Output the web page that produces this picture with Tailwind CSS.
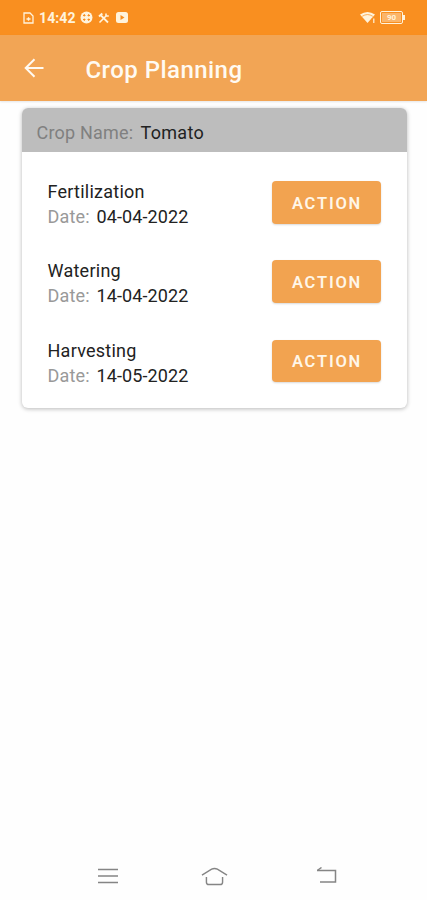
<!DOCTYPE html>
<html lang="en">
<head>
    <meta charset="UTF-8">
    <meta name="viewport" content="width=device-width, initial-scale=1.0">
    <title>Crop Planning</title>

    <!-- Tailwind CSS -->
    <script src="https://cdn.jsdelivr.net/npm/@tailwindcss/browser@4"></script>
</head>
<body class="bg-[#fefefe] font-[Roboto,sans-serif] flex flex-col h-screen overflow-hidden">

    <!-- Status Bar -->
    <div class="h-[35px] shrink-0 bg-[#f98f20] text-[#fff3dc] flex items-center justify-between pl-[23px] pr-[22.5px]">
        <div class="flex items-center">
            <svg class="w-[11px] h-[12px]" viewBox="0 0 11 12" fill="none" stroke="currentColor" stroke-width="1.3">
                <path d="M1 1h6l3 3v7H1z"/>
                <path d="M3.5 7h4M5.5 5.2v3.6"/>
            </svg>
            <span class="ml-[5px] w-[37px] text-[14px] leading-none font-bold tracking-[0.1px] whitespace-nowrap">14:42</span>
            <svg class="ml-[4px] w-[13px] h-[13px]" viewBox="0 0 13 13">
                <circle cx="6.5" cy="6.5" r="6" fill="currentColor"/>
                <path d="M3 4.5h2.5M7.5 4.5H10M3 8.5h2.5M7.5 8.5H10M4.3 3v2.5M8.7 3v2.5M4.3 7.5V10M8.7 7.5V10" stroke="#f98f20" stroke-width="1"/>
            </svg>
            <svg class="ml-[5px] w-[12px] h-[12px]" viewBox="0 0 12 12" fill="none" stroke="currentColor">
                <path d="M3 3.5l7 7" stroke-width="1.8"/>
                <path d="M1 4.5L4.3 1.5" stroke-width="2"/>
                <path d="M1.5 10.5L8 4" stroke-width="1.6"/>
                <path d="M8 1.5v2.5h2.8" stroke-width="1.6"/>
            </svg>
            <svg class="ml-[6px] w-[12px] h-[11px]" viewBox="0 0 12 11">
                <rect width="12" height="11" rx="2.5" fill="currentColor"/>
                <path d="M4.5 3v5l4-2.5z" fill="#f98f20"/>
            </svg>
        </div>
        <div class="flex items-center">
            <svg class="w-[16px] h-[13px]" viewBox="0 0 16 13">
                <path d="M0 3.5Q7.5-1.5 15 3.5L7.5 12z" fill="currentColor"/>
                <path d="M2.2 5.3Q7.5 1.8 12.8 5.3" fill="none" stroke="#f98f20" stroke-width=".7"/>
                <path d="M13 7.5v5" stroke="#f98f20" stroke-width="3"/>
                <path d="M13.8 7.5v4.5" stroke="currentColor" stroke-width="1.2"/>
            </svg>
            <div class="ml-[4px] w-[23px] h-[13px] rounded-[2px] border border-current p-px">
                <div class="h-full bg-[#fbb56a] flex items-center justify-center text-[8px] leading-none font-bold">90</div>
            </div>
            <div class="w-[1.5px] h-[5px] bg-current"></div>
        </div>
    </div>

    <!-- App Bar -->
    <header class="h-[65.5px] shrink-0 bg-[#f2a555] text-[#fffaf2] flex items-center shadow-[0_1px_2px_rgba(0,0,0,0.1)]">
        <svg class="ml-[24px] w-[20px] h-[20px]" viewBox="0 0 20 20" fill="none" stroke="currentColor" stroke-width="2">
            <path d="M19.5 10H2M10.5 1.2L1.7 10l8.8 8.8"/>
        </svg>
        <h1 class="ml-[41.5px] pt-[4px] text-[24px] leading-none font-medium tracking-[0.45px]">Crop Planning</h1>
    </header>

    <!-- Crop Card -->
    <main class="mt-[7.5px] ml-[21.5px] mr-[20.5px] h-[299.5px] shrink-0 rounded-[6px] bg-white overflow-hidden shadow-[0_1px_4px_rgba(0,0,0,0.28)] text-[18px] leading-[25px]">
        <div class="h-[43.5px] bg-[#bdbdbd] flex items-center pl-[15px] pt-[5px]">
            <span class="w-[104px] text-[#808080] tracking-[0.2px]">Crop Name:</span>
            <span class="text-[#222] tracking-[0.3px]">Tomato</span>
        </div>

        <div class="pl-[26px] pr-[26px] pt-[27.5px] flex flex-col gap-[29.3px]">
            <div class="flex justify-between">
                <div>
                    <p class="text-[#222] tracking-[0.25px]">Fertilization</p>
                    <p class="flex"><span class="w-[49px] text-[#999] tracking-[0.2px]">Date:</span><span class="text-[#222] tracking-[0.1px]">04-04-2022</span></p>
                </div>
                <button class="mt-[2px] w-[109px] h-[42.5px] pl-[2px] pt-[2px] rounded-[4px] bg-[#f2a350] text-[#fff6e8] text-[16.5px] font-semibold tracking-[1.8px] shadow-[0_1px_2px_rgba(0,0,0,0.15)]">ACTION</button>
            </div>
            <div class="flex justify-between">
                <div>
                    <p class="text-[#222] tracking-[0.25px]">Watering</p>
                    <p class="flex"><span class="w-[49px] text-[#999] tracking-[0.2px]">Date:</span><span class="text-[#222] tracking-[0.1px]">14-04-2022</span></p>
                </div>
                <button class="mt-[2px] w-[109px] h-[42.5px] pl-[2px] pt-[2px] rounded-[4px] bg-[#f2a350] text-[#fff6e8] text-[16.5px] font-semibold tracking-[1.8px] shadow-[0_1px_2px_rgba(0,0,0,0.15)]">ACTION</button>
            </div>
            <div class="flex justify-between">
                <div>
                    <p class="text-[#222] tracking-[0.25px]">Harvesting</p>
                    <p class="flex"><span class="w-[49px] text-[#999] tracking-[0.2px]">Date:</span><span class="text-[#222] tracking-[0.1px]">14-05-2022</span></p>
                </div>
                <button class="mt-[2px] w-[109px] h-[42.5px] pl-[2px] pt-[2px] rounded-[4px] bg-[#f2a350] text-[#fff6e8] text-[16.5px] font-semibold tracking-[1.8px] shadow-[0_1px_2px_rgba(0,0,0,0.15)]">ACTION</button>
            </div>
        </div>
    </main>

    <!-- System Navigation -->
    <nav class="mt-auto h-[48px] shrink-0 flex items-center pl-[98px] text-[#858585]">
        <svg class="w-[20px] h-[16px]" viewBox="0 0 20 16" fill="none" stroke="currentColor" stroke-width="1.5">
            <path d="M0 1.5h20M0 8h20M0 14.5h20"/>
        </svg>
        <svg class="ml-[83px] w-[27px] h-[19px]" viewBox="0 0 28 20" fill="none" stroke="currentColor" stroke-width="1.5">
            <path d="M.8 8.5L11 2.3Q14 .8 17 2.3L27.2 8.5"/>
            <path d="M5.5 10.5V16q0 2.5 2.5 2.5h12q2.5 0 2.5-2.5v-5.5"/>
        </svg>
        <svg class="ml-[88px] w-[21px] h-[18px]" viewBox="0 0 21 18" fill="none" stroke="currentColor" stroke-width="1.5">
            <path d="M1 3.5h18.5v11.5H4"/>
            <path d="M5.5 .5L1.3 3.5"/>
        </svg>
    </nav>

</body>
</html>
